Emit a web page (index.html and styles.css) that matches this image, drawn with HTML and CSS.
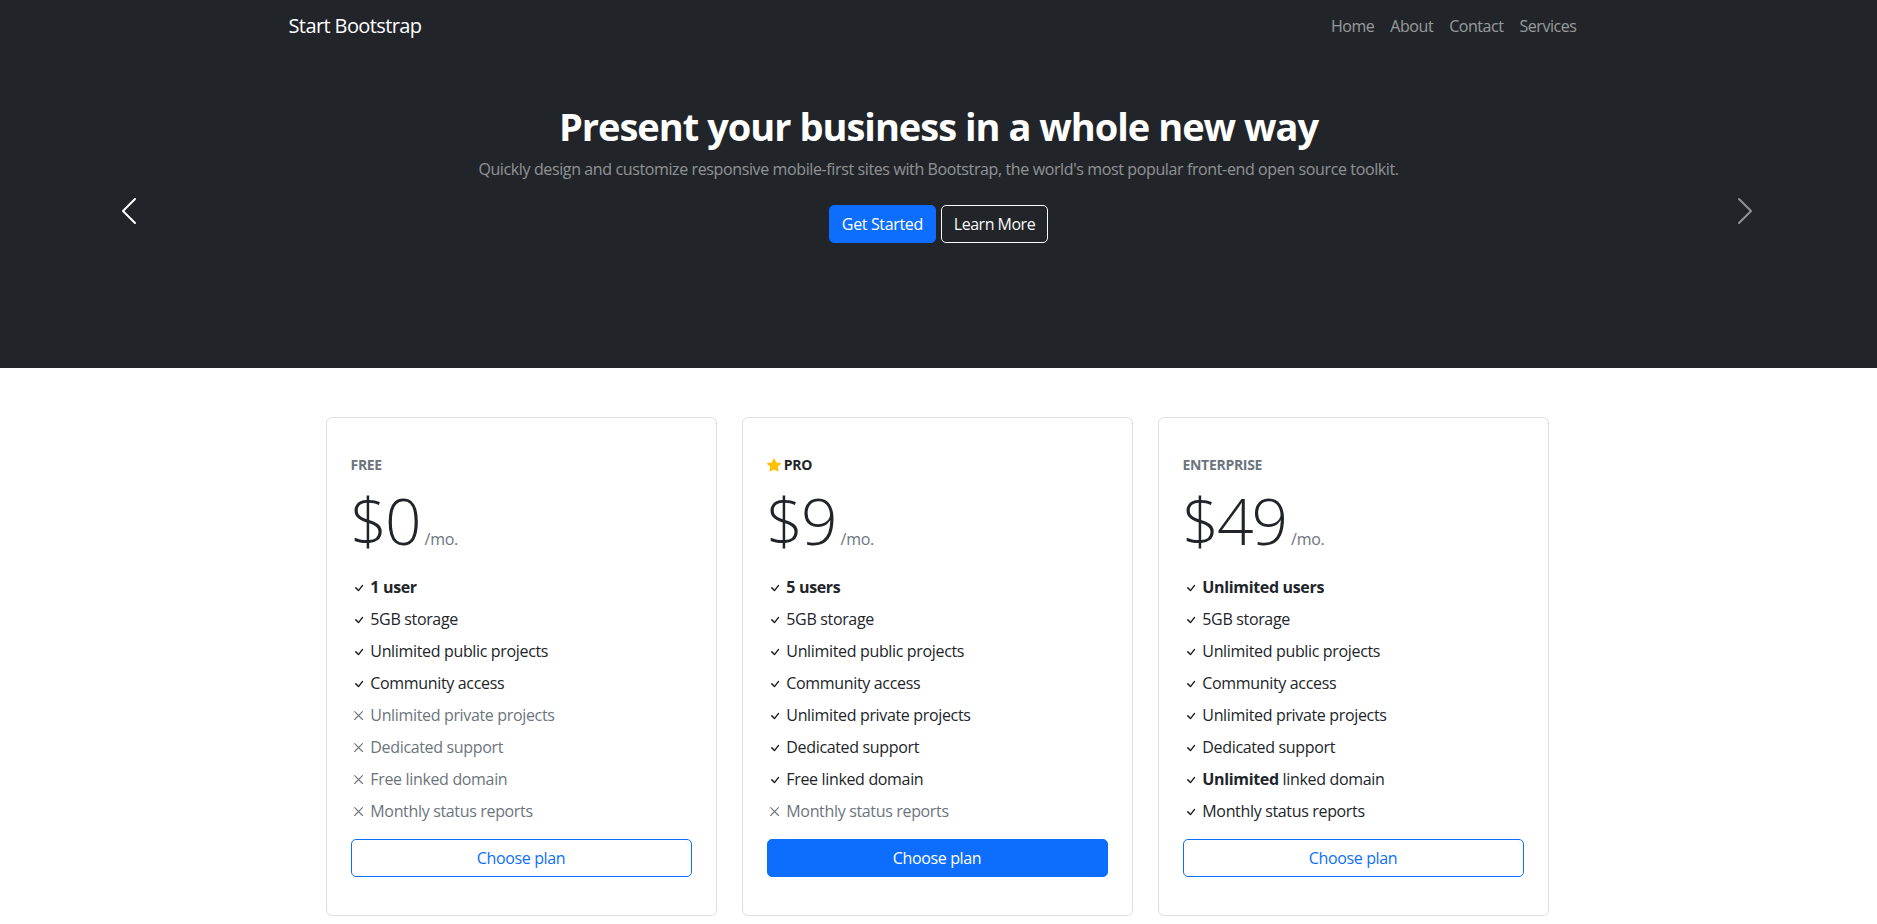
FILE: index.html
```html
<!DOCTYPE html>
<html lang="en">
<head>
<meta charset="utf-8">
<title>Start Bootstrap - Pricing</title>
<link rel="stylesheet" href="styles.css">
</head>
<body>
<header class="site-header">
  <nav class="navbar">
    <div class="nav-inner">
      <a class="brand" href="#">Start Bootstrap</a>
      <ul class="nav-links">
        <li><a href="#">Home</a></li>
        <li><a href="#">About</a></li>
        <li><a href="#">Contact</a></li>
        <li><a href="#">Services</a></li>
      </ul>
    </div>
  </nav>
  <section class="hero">
    <div class="hero-content">
      <h1 class="hero-title">Present your business in a whole new way</h1>
      <p class="hero-lead">Quickly design and customize responsive mobile-first sites with Bootstrap, the world's most popular front-end open source toolkit.</p>
      <div class="hero-actions">
        <a class="btn btn-primary" href="#">Get Started</a>
        <a class="btn btn-outline-light" href="#">Learn More</a>
      </div>
    </div>
    <button class="hero-control prev" aria-label="Previous">
      <svg viewBox="0 0 16 16" width="32" height="32"><path fill="currentColor" d="M11.354 1.646a.5.5 0 0 1 0 .708L5.707 8l5.647 5.646a.5.5 0 0 1-.708.708l-6-6a.5.5 0 0 1 0-.708l6-6a.5.5 0 0 1 .708 0z"/></svg>
    </button>
    <button class="hero-control next" aria-label="Next">
      <svg viewBox="0 0 16 16" width="32" height="32"><path fill="currentColor" d="M4.646 1.646a.5.5 0 0 1 .708 0l6 6a.5.5 0 0 1 0 .708l-6 6a.5.5 0 0 1-.708-.708L10.293 8 4.646 2.354a.5.5 0 0 1 0-.708z"/></svg>
    </button>
  </section>
</header>

<main class="pricing">
  <div class="cards">
    <div class="card">
      <div class="plan-name">FREE</div>
      <div class="price"><span class="amount">$0</span><span class="per">/mo.</span></div>
      <ul class="features">
        <li><svg class="ic" viewBox="0 0 16 16"><path fill="currentColor" d="M10.97 4.97a.75.75 0 0 1 1.07 1.05l-3.99 4.99a.75.75 0 0 1-1.08.02L4.324 8.384a.75.75 0 1 1 1.06-1.06l2.094 2.093 3.473-4.425a.267.267 0 0 1 .02-.022z"/></svg> <strong>1 user</strong></li>
        <li><svg class="ic" viewBox="0 0 16 16"><path fill="currentColor" d="M10.97 4.97a.75.75 0 0 1 1.07 1.05l-3.99 4.99a.75.75 0 0 1-1.08.02L4.324 8.384a.75.75 0 1 1 1.06-1.06l2.094 2.093 3.473-4.425a.267.267 0 0 1 .02-.022z"/></svg> 5GB storage</li>
        <li><svg class="ic" viewBox="0 0 16 16"><path fill="currentColor" d="M10.97 4.97a.75.75 0 0 1 1.07 1.05l-3.99 4.99a.75.75 0 0 1-1.08.02L4.324 8.384a.75.75 0 1 1 1.06-1.06l2.094 2.093 3.473-4.425a.267.267 0 0 1 .02-.022z"/></svg> Unlimited public projects</li>
        <li><svg class="ic" viewBox="0 0 16 16"><path fill="currentColor" d="M10.97 4.97a.75.75 0 0 1 1.07 1.05l-3.99 4.99a.75.75 0 0 1-1.08.02L4.324 8.384a.75.75 0 1 1 1.06-1.06l2.094 2.093 3.473-4.425a.267.267 0 0 1 .02-.022z"/></svg> Community access</li>
        <li class="off"><svg class="ic" viewBox="0 0 16 16"><path stroke="currentColor" stroke-width="1.1" stroke-linecap="round" d="M3.7 3.7l7.8 7.8M11.5 3.7l-7.8 7.8"/></svg> Unlimited private projects</li>
        <li class="off"><svg class="ic" viewBox="0 0 16 16"><path stroke="currentColor" stroke-width="1.1" stroke-linecap="round" d="M3.7 3.7l7.8 7.8M11.5 3.7l-7.8 7.8"/></svg> Dedicated support</li>
        <li class="off"><svg class="ic" viewBox="0 0 16 16"><path stroke="currentColor" stroke-width="1.1" stroke-linecap="round" d="M3.7 3.7l7.8 7.8M11.5 3.7l-7.8 7.8"/></svg> Free linked domain</li>
        <li class="off"><svg class="ic" viewBox="0 0 16 16"><path stroke="currentColor" stroke-width="1.1" stroke-linecap="round" d="M3.7 3.7l7.8 7.8M11.5 3.7l-7.8 7.8"/></svg> Monthly status reports</li>
      </ul>
      <a class="btn btn-outline-primary btn-block" href="#">Choose plan</a>
    </div>

    <div class="card">
      <div class="plan-name featured"><svg class="star" viewBox="0 0 16 16"><path fill="#ffc107" d="M3.612 15.443c-.386.198-.824-.149-.746-.592l.83-4.73L.173 6.765c-.329-.314-.158-.888.283-.95l4.898-.696L7.538.792c.197-.39.73-.39.927 0l2.184 4.327 4.898.696c.441.062.612.636.282.95l-3.522 3.356.83 4.73c.078.443-.36.79-.746.592L8 13.187l-4.389 2.256z"/></svg> PRO</div>
      <div class="price"><span class="amount">$9</span><span class="per">/mo.</span></div>
      <ul class="features">
        <li><svg class="ic" viewBox="0 0 16 16"><path fill="currentColor" d="M10.97 4.97a.75.75 0 0 1 1.07 1.05l-3.99 4.99a.75.75 0 0 1-1.08.02L4.324 8.384a.75.75 0 1 1 1.06-1.06l2.094 2.093 3.473-4.425a.267.267 0 0 1 .02-.022z"/></svg> <strong>5 users</strong></li>
        <li><svg class="ic" viewBox="0 0 16 16"><path fill="currentColor" d="M10.97 4.97a.75.75 0 0 1 1.07 1.05l-3.99 4.99a.75.75 0 0 1-1.08.02L4.324 8.384a.75.75 0 1 1 1.06-1.06l2.094 2.093 3.473-4.425a.267.267 0 0 1 .02-.022z"/></svg> 5GB storage</li>
        <li><svg class="ic" viewBox="0 0 16 16"><path fill="currentColor" d="M10.97 4.97a.75.75 0 0 1 1.07 1.05l-3.99 4.99a.75.75 0 0 1-1.08.02L4.324 8.384a.75.75 0 1 1 1.06-1.06l2.094 2.093 3.473-4.425a.267.267 0 0 1 .02-.022z"/></svg> Unlimited public projects</li>
        <li><svg class="ic" viewBox="0 0 16 16"><path fill="currentColor" d="M10.97 4.97a.75.75 0 0 1 1.07 1.05l-3.99 4.99a.75.75 0 0 1-1.08.02L4.324 8.384a.75.75 0 1 1 1.06-1.06l2.094 2.093 3.473-4.425a.267.267 0 0 1 .02-.022z"/></svg> Community access</li>
        <li><svg class="ic" viewBox="0 0 16 16"><path fill="currentColor" d="M10.97 4.97a.75.75 0 0 1 1.07 1.05l-3.99 4.99a.75.75 0 0 1-1.08.02L4.324 8.384a.75.75 0 1 1 1.06-1.06l2.094 2.093 3.473-4.425a.267.267 0 0 1 .02-.022z"/></svg> Unlimited private projects</li>
        <li><svg class="ic" viewBox="0 0 16 16"><path fill="currentColor" d="M10.97 4.97a.75.75 0 0 1 1.07 1.05l-3.99 4.99a.75.75 0 0 1-1.08.02L4.324 8.384a.75.75 0 1 1 1.06-1.06l2.094 2.093 3.473-4.425a.267.267 0 0 1 .02-.022z"/></svg> Dedicated support</li>
        <li><svg class="ic" viewBox="0 0 16 16"><path fill="currentColor" d="M10.97 4.97a.75.75 0 0 1 1.07 1.05l-3.99 4.99a.75.75 0 0 1-1.08.02L4.324 8.384a.75.75 0 1 1 1.06-1.06l2.094 2.093 3.473-4.425a.267.267 0 0 1 .02-.022z"/></svg> Free linked domain</li>
        <li class="off"><svg class="ic" viewBox="0 0 16 16"><path stroke="currentColor" stroke-width="1.1" stroke-linecap="round" d="M3.7 3.7l7.8 7.8M11.5 3.7l-7.8 7.8"/></svg> Monthly status reports</li>
      </ul>
      <a class="btn btn-primary btn-block" href="#">Choose plan</a>
    </div>

    <div class="card">
      <div class="plan-name">ENTERPRISE</div>
      <div class="price"><span class="amount">$49</span><span class="per">/mo.</span></div>
      <ul class="features">
        <li><svg class="ic" viewBox="0 0 16 16"><path fill="currentColor" d="M10.97 4.97a.75.75 0 0 1 1.07 1.05l-3.99 4.99a.75.75 0 0 1-1.08.02L4.324 8.384a.75.75 0 1 1 1.06-1.06l2.094 2.093 3.473-4.425a.267.267 0 0 1 .02-.022z"/></svg> <strong>Unlimited users</strong></li>
        <li><svg class="ic" viewBox="0 0 16 16"><path fill="currentColor" d="M10.97 4.97a.75.75 0 0 1 1.07 1.05l-3.99 4.99a.75.75 0 0 1-1.08.02L4.324 8.384a.75.75 0 1 1 1.06-1.06l2.094 2.093 3.473-4.425a.267.267 0 0 1 .02-.022z"/></svg> 5GB storage</li>
        <li><svg class="ic" viewBox="0 0 16 16"><path fill="currentColor" d="M10.97 4.97a.75.75 0 0 1 1.07 1.05l-3.99 4.99a.75.75 0 0 1-1.08.02L4.324 8.384a.75.75 0 1 1 1.06-1.06l2.094 2.093 3.473-4.425a.267.267 0 0 1 .02-.022z"/></svg> Unlimited public projects</li>
        <li><svg class="ic" viewBox="0 0 16 16"><path fill="currentColor" d="M10.97 4.97a.75.75 0 0 1 1.07 1.05l-3.99 4.99a.75.75 0 0 1-1.08.02L4.324 8.384a.75.75 0 1 1 1.06-1.06l2.094 2.093 3.473-4.425a.267.267 0 0 1 .02-.022z"/></svg> Community access</li>
        <li><svg class="ic" viewBox="0 0 16 16"><path fill="currentColor" d="M10.97 4.97a.75.75 0 0 1 1.07 1.05l-3.99 4.99a.75.75 0 0 1-1.08.02L4.324 8.384a.75.75 0 1 1 1.06-1.06l2.094 2.093 3.473-4.425a.267.267 0 0 1 .02-.022z"/></svg> Unlimited private projects</li>
        <li><svg class="ic" viewBox="0 0 16 16"><path fill="currentColor" d="M10.97 4.97a.75.75 0 0 1 1.07 1.05l-3.99 4.99a.75.75 0 0 1-1.08.02L4.324 8.384a.75.75 0 1 1 1.06-1.06l2.094 2.093 3.473-4.425a.267.267 0 0 1 .02-.022z"/></svg> Dedicated support</li>
        <li><svg class="ic" viewBox="0 0 16 16"><path fill="currentColor" d="M10.97 4.97a.75.75 0 0 1 1.07 1.05l-3.99 4.99a.75.75 0 0 1-1.08.02L4.324 8.384a.75.75 0 1 1 1.06-1.06l2.094 2.093 3.473-4.425a.267.267 0 0 1 .02-.022z"/></svg> <strong>Unlimited</strong> linked domain</li>
        <li><svg class="ic" viewBox="0 0 16 16"><path fill="currentColor" d="M10.97 4.97a.75.75 0 0 1 1.07 1.05l-3.99 4.99a.75.75 0 0 1-1.08.02L4.324 8.384a.75.75 0 1 1 1.06-1.06l2.094 2.093 3.473-4.425a.267.267 0 0 1 .02-.022z"/></svg> Monthly status reports</li>
      </ul>
      <a class="btn btn-outline-primary btn-block" href="#">Choose plan</a>
    </div>
  </div>
</main>
</body>
</html>
```
FILE: styles.css
```css
* { box-sizing: border-box; }

html, body {
  margin: 0;
  padding: 0;
}

body {
  font-family: "Open Sans", "Noto Sans", "Liberation Sans", sans-serif;
  font-size: 16px;
  line-height: 1.5;
  color: #212529;
  background: #fff;
}

a { text-decoration: none; }

/* ---------- header ---------- */
.site-header {
  background: #212529;
}

.navbar {
  height: 51px;
  display: flex;
  align-items: center;
}

.nav-inner {
  width: 1320px;
  margin: 0 auto;
  padding: 0 14px 0 10px;
  display: flex;
  align-items: center;
  justify-content: space-between;
}

.brand {
  color: #fff;
  font-size: 20px;
  line-height: 30px;
  letter-spacing: -0.6px;
}

.nav-links {
  list-style: none;
  margin: 0;
  padding: 0;
  display: flex;
}

.nav-links a {
  display: block;
  padding: 0 8px;
  line-height: 24px;
  letter-spacing: -0.45px;
  color: rgba(255, 255, 255, 0.55);
}

.hero {
  position: relative;
  height: 317px;
  padding-top: 51px;
}

.hero-content {
  text-align: center;
}

.hero-title {
  margin: 0 0 7px;
  font-size: 38px;
  line-height: 48px;
  font-weight: 700;
  letter-spacing: -1px;
  color: #fff;
}

.hero-lead {
  margin: 0 0 24px;
  font-size: 16px;
  line-height: 24px;
  letter-spacing: -0.38px;
  color: rgba(255, 255, 255, 0.5);
}

.hero-actions {
  display: flex;
  justify-content: center;
  gap: 5px;
}

.hero-control {
  position: absolute;
  top: 144px;
  width: 32px;
  height: 32px;
  padding: 0;
  border: 0;
  background: none;
  color: #fff;
  cursor: pointer;
}

.hero-control svg { display: block; }

.hero-control.prev { left: 113px; }
.hero-control.next { right: 116px; color: rgba(255, 255, 255, 0.5); }

/* ---------- buttons ---------- */
.btn {
  display: inline-block;
  padding: 6px 12px;
  font-size: 16px;
  line-height: 24px;
  letter-spacing: -0.35px;
  border: 1px solid transparent;
  border-radius: 5px;
  text-align: center;
}

.btn-primary {
  background: #0d6efd;
  border-color: #0d6efd;
  color: #fff;
}

.btn-outline-light {
  border-color: #f8f9fa;
  color: #f8f9fa;
  letter-spacing: -0.5px;
}

.btn-outline-primary {
  border-color: #0d6efd;
  color: #0d6efd;
}

.btn-block {
  display: block;
  width: 100%;
}

/* ---------- pricing ---------- */
.pricing {
  padding: 49px 3px 48px 0;
}

.cards {
  width: 1223px;
  margin: 0 auto;
  display: grid;
  grid-template-columns: repeat(3, 1fr);
  gap: 25px;
}

.card {
  border: 1px solid rgba(0, 0, 0, 0.125);
  border-radius: 6px;
  padding: 36px 24px 38px;
}

.plan-name {
  font-size: 14px;
  line-height: 21px;
  font-weight: 700;
  letter-spacing: -0.3px;
  color: #6c757d;
  margin-bottom: 6px;
}

.plan-name.featured {
  color: #212529;
}

.star {
  width: 14px;
  height: 14px;
  vertical-align: -2px;
}

.price {
  margin-bottom: 15px;
}

.amount {
  font-size: 64px;
  line-height: 79px;
  font-weight: 300;
  letter-spacing: -2px;
}

.per {
  margin-left: 5px;
  color: #6c757d;
  letter-spacing: -0.3px;
}

.features {
  list-style: none;
  margin: 0 0 16px;
  padding: 0;
  letter-spacing: -0.34px;
}

.features li {
  line-height: 24px;
  margin-bottom: 8px;
}

.features li:last-child { margin-bottom: 0; }

.features li.off {
  color: #6c757d;
}

.ic {
  width: 16px;
  height: 16px;
  vertical-align: -3px;
}

strong { font-weight: 700; }
```
